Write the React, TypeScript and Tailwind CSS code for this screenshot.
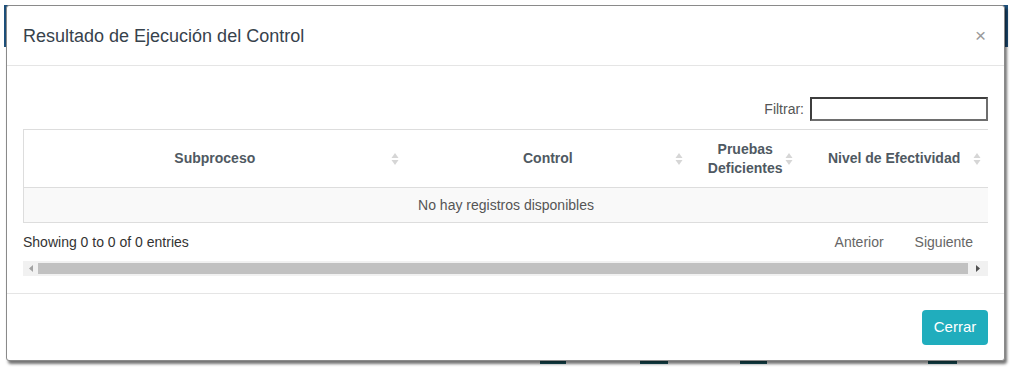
import React from "react";

const font = { fontFamily: '"Liberation Sans", Arial, sans-serif' };

const SortIcon = () => (
  <svg width="8" height="14" viewBox="0 0 8 14" className="absolute right-[7px] top-1/2 -translate-y-1/2">
    <path d="M4 1 L7.5 6 L0.5 6 Z" fill="#d6d6d6" />
    <path d="M4 13 L7.5 8 L0.5 8 Z" fill="#d6d6d6" />
  </svg>
);

interface HeadCellProps {
  width: string;
  children: React.ReactNode;
}

const HeadCell = ({ width, children }: HeadCellProps) => (
  <div className={`${width} relative flex items-center justify-center px-[18px] text-center text-[14px] font-bold leading-[19px] text-[#4f5962]`}>
    {children}
    <SortIcon />
  </div>
);

export default function App() {
  return (
    <div className="relative h-[372px] w-[1015px] overflow-hidden bg-white" style={font}>
      {/* page peeking behind the dialog */}
      <div className="absolute left-[4px] top-[5px] h-[42px] w-[1004px] bg-[#1d4f7a]" />
      <div className="absolute left-[540px] top-[360px] h-[4px] w-[26px] bg-[#1b5a63]" />
      <div className="absolute left-[640px] top-[360px] h-[4px] w-[28px] bg-[#1b5a63]" />
      <div className="absolute left-[740px] top-[360px] h-[4px] w-[27px] bg-[#1b5a63]" />
      <div className="absolute left-[928px] top-[360px] h-[4px] w-[29px] bg-[#1b5a63]" />

      <div className="relative ml-[6px] mt-[5px] flex h-[356px] w-[999px] flex-col rounded-[3px] border border-[#8a8a8a] bg-white shadow-[2px_3px_3px_rgba(0,0,0,0.55)]">
        {/* header */}
        <div className="flex h-[60px] items-center justify-between border-b border-[#e5e5e5] pl-[16px] pr-[18px]">
          <h4 className="text-[18px] leading-[20px] text-[#37424c]">Resultado de Ejecución del Control</h4>
          <span className="text-[19px] leading-none text-[#9a9a9a]">×</span>
        </div>

        {/* body */}
        <div className="flex flex-1 flex-col px-[16px] pt-[31px]">
          <div className="flex items-center justify-end gap-[6px]">
            <span className="text-[14px] text-[#555]">Filtrar:</span>
            <div className="h-[24px] w-[178px] border-2 border-[#3e3e3e] border-b-[#6e6e6e] border-r-[#6e6e6e] bg-white" />
          </div>

          <div className="mt-[8px] w-[965px] border-l border-[#dddddd]">
            <div className="flex h-[59px] border-y border-[#dddddd]">
              <HeadCell width="w-[382px]">Subproceso</HeadCell>
              <HeadCell width="w-[285px]">Control</HeadCell>
              <HeadCell width="w-[110px]">
                <span>
                  Pruebas
                  <br />
                  Deficientes
                </span>
              </HeadCell>
              <HeadCell width="w-[188px]">Nivel de Efectividad</HeadCell>
            </div>
            <div className="flex h-[35px] items-center justify-center border-b border-[#dddddd] bg-[#f9f9f9] text-[14px] text-[#555]">
              No hay registros disponibles
            </div>
          </div>

          <div className="mt-[11px] flex h-[16px] w-[965px] items-center justify-between text-[14px]">
            <span className="text-[#333]">Showing 0 to 0 of 0 entries</span>
            <div className="flex gap-[31px] pr-[15px] text-[#666]">
              <span>Anterior</span>
              <span>Siguiente</span>
            </div>
          </div>

          {/* horizontal scrollbar */}
          <div className="mt-[11px] flex h-[15px] w-[965px] items-center bg-[#f1f1f1]">
            <div className="flex w-[15px] justify-center">
              <svg width="4" height="7" viewBox="0 0 4 7">
                <path d="M4 0 L0 3.5 L4 7 Z" fill="#a3a3a3" />
              </svg>
            </div>
            <div className="h-[11px] w-[930px] bg-[#c1c1c1]" />
            <div className="flex flex-1 justify-center">
              <svg width="4" height="7" viewBox="0 0 4 7">
                <path d="M0 0 L4 3.5 L0 7 Z" fill="#505050" />
              </svg>
            </div>
          </div>
        </div>

        {/* footer */}
        <div className="flex h-[67px] items-center justify-end border-t border-[#e5e5e5] px-[16px]">
          <button className="h-[35px] w-[66px] rounded-[4px] bg-[#20adbd] text-[15px] text-white">Cerrar</button>
        </div>
      </div>
    </div>
  );
}
